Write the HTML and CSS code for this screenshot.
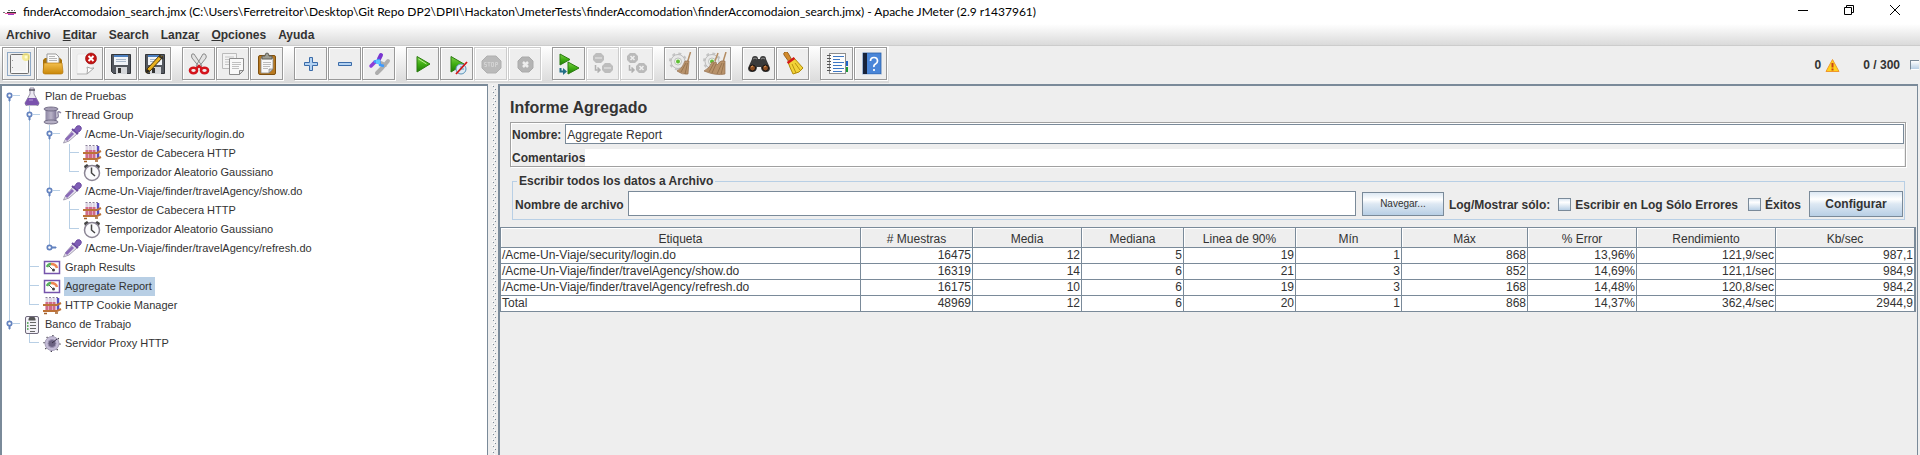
FILE: index.html
```html
<!DOCTYPE html>
<html lang="es">
<head>
<meta charset="utf-8">
<title>finderAccomodaion_search.jmx - Apache JMeter</title>
<link rel="stylesheet" href="styles.css">
</head>
<body>
<svg class="sprite" aria-hidden="true">
  <defs>
    <linearGradient id="green" x1="0" y1="0" x2="0" y2="1"><stop offset="0" stop-color="#7fd04a"/><stop offset=".5" stop-color="#3fae12"/><stop offset="1" stop-color="#1f7a08"/></linearGradient>
    <linearGradient id="gold" x1="0" y1="0" x2="0" y2="1"><stop offset="0" stop-color="#f3bf4e"/><stop offset="1" stop-color="#c98708"/></linearGradient>
    <linearGradient id="violet" x1="0" y1="0" x2="1" y2="0"><stop offset="0" stop-color="#8d86a3"/><stop offset=".5" stop-color="#b9b3c8"/><stop offset="1" stop-color="#7d7496"/></linearGradient>
  </defs>
  <symbol id="i-new" viewBox="0 0 24 24"><rect x=".5" y=".5" width="23" height="23" fill="#eee" stroke="#8fa9c6"/><rect x="3.500" y="2.500" width="18" height="19" rx="1" fill="#f2f2f2" stroke="#6f6f6f"/><path d="M5 20h15V6" fill="none" stroke="#fff"/><path d="M5.500 8v1M5.500 15v1" stroke="#999"/><circle cx="19" cy="5" r="4" fill="#f4e77c" opacity=".8"/><circle cx="19" cy="5" r="1.500" fill="#fffbd0"/></symbol>
  <symbol id="i-open" viewBox="0 0 24 24"><path d="M2 21V8l2-2h15l2 2v13z" fill="#a8720a"/><path d="M6 12V2h9l3 3v7z" fill="#fafafa" stroke="#999"/><path d="M8 4.500h6M8 6.500h8M8 8.500h8" stroke="#b5b5b5"/><path d="M2 20l1-9h18l1 9q0 2-2 2H4q-2 0-2-2z" fill="url(#gold)" stroke="#b8790c" stroke-width=".7"/></symbol>
  <symbol id="i-close" viewBox="0 0 24 24"><path d="M2 22V4q0-2 2-2h14v14l-6 6z" fill="#f6f6f6" stroke="#ddd" stroke-width=".6"/><path d="M12 22q1-5 0-7 4 2 7 1z" fill="#fff" stroke="#a5a5a5"/><path d="M2 22h10" stroke="#bbb"/><circle cx="16" cy="6.500" r="5.500" fill="#c41414" stroke="#8f0c0c" stroke-width=".6"/><path d="M13.500 4l5 5M18.500 4l-5 5" stroke="#fff" stroke-width="2"/></symbol>
  <symbol id="i-save" viewBox="0 0 24 24"><path d="M2.500 2.500h19v19h-17l-2-2z" fill="#54585f" stroke="#33363b"/><rect x="5" y="3" width="14" height="10" fill="#f1f4f8"/><rect x="5" y="3" width="14" height="2" fill="#4b7fc0"/><path d="M7 7.500h10M7 9.500h10" stroke="#a9b8ca"/><rect x="7" y="15" width="11" height="7" fill="#d5d7da"/><rect x="9" y="16" width="3" height="5" fill="#333"/></symbol>
  <symbol id="i-saveas" viewBox="0 0 24 24"><use href="#i-save"/><path d="M3 21l1-4L17 3l3 2L7 19z" fill="#e8b120" stroke="#4a3305"/><path d="M16 4l4 3" stroke="#333" stroke-width="2"/><path d="M3 21l1-4 3 2z" fill="#222"/></symbol>
  <symbol id="i-cut" viewBox="0 0 24 24"><path d="M5 2q-1 2 0 4l8 10 2-2L7 2zM18 2q2 2 1 4L11 16l-2-2 7-12z" fill="#e3e3e3" stroke="#8b8b8b"/><ellipse cx="6.500" cy="18.500" rx="3.500" ry="2.700" fill="none" stroke="#d4141c" stroke-width="2.600"/><ellipse cx="17.500" cy="18.500" rx="3.500" ry="2.700" fill="none" stroke="#d4141c" stroke-width="2.600"/><path d="M9 17l3-3 3 3" fill="none" stroke="#d4141c" stroke-width="2.400"/></symbol>
  <symbol id="i-copy" viewBox="0 0 24 24"><path d="M1.500 1.500h14v15h-14z" fill="#f3f3f3" stroke="#bbb"/><path d="M4 5h9M4 7.500h4M4 10h4M4 12.500h4" stroke="#c5c5c5"/><path d="M8.500 6.500h14v12l-4 4h-10z" fill="#f9f9f9" stroke="#8c8c8c"/><path d="M11 10.500h9M11 12.500h9M11 14.500h7M11 16.500h7" stroke="#c0c0c0"/><path d="M18.500 22.500v-4h4z" fill="#ddd" stroke="#888"/></symbol>
  <symbol id="i-paste" viewBox="0 0 24 24"><rect x="3.500" y="3.500" width="17" height="19" rx="1.500" fill="#b87a22" stroke="#80500f"/><path d="M6 6h12v11l-4 4H6z" fill="#f8f8f8" stroke="#8a8a8a" stroke-width=".8"/><path d="M8 10.500h8M8 12.500h8M8 14.500h7M8 16.500h5" stroke="#bbb"/><path d="M14 21v-4h4z" fill="#ccc" stroke="#777" stroke-width=".6"/><path d="M7 7V4h3q0-3 2-3t2 3h3v3z" fill="#9d9d93" stroke="#5f5f58"/></symbol>
  <symbol id="i-plus" viewBox="0 0 24 24"><path d="M10.500 5.500h3v5h5v3h-5v5h-3v-5h-5v-3h5z" fill="#b3d2f2" stroke="#3a6ba8"/></symbol>
  <symbol id="i-minus" viewBox="0 0 24 24"><path d="M5.500 10.500h13v3h-13z" fill="#b3d2f2" stroke="#3a6ba8"/></symbol>
  <symbol id="i-toggle" viewBox="0 0 24 24"><path d="M10 21l5-5M15 16l6-7M14 11l4 2" stroke="#adadad" stroke-width="4" stroke-linecap="round"/><path d="M14 3l-2 4" stroke="#7a35cf" stroke-width="4" stroke-linecap="round"/><path d="M4 14l4-4" stroke="#8b3ed8" stroke-width="3.500" stroke-linecap="round"/><path d="M7 10l5-2 1 5 4 1" fill="none" stroke="#3d9bff" stroke-width="2.500" stroke-linejoin="round"/><rect x="9" y="8" width="4" height="4" fill="#5fc6ff"/></symbol>
  <symbol id="i-start" viewBox="0 0 24 24"><path d="M6 4.500L19 12 6 20z" fill="url(#green)" stroke="#2b7d10"/><path d="M7.500 7l8 5" stroke="#b5ee8c"/></symbol>
  <symbol id="i-startno" viewBox="0 0 24 24"><path d="M6 4.500L19 12 6 20z" fill="url(#green)" stroke="#2b7d10"/><circle cx="16" cy="17" r="5" fill="#dceaf4" stroke="#5b93b8"/><path d="M16 14v3h3" fill="none" stroke="#5b93b8"/><path d="M11 22L22 10" stroke="#d01515" stroke-width="1.800"/></symbol>
  <symbol id="i-stop" viewBox="0 0 24 24"><path d="M8 4h9l5 5v7l-5 5H8l-5-5V9z" fill="#bababa" stroke="#b0b0b0"/><path d="M7.500 10.500h-2v2h2v2h-2M8.500 10.500h3M10 10.500v4M12.500 10.500h2v4h-2zM16.500 15v-4.500h2v2h-2" fill="none" stroke="#d2d2d2"/></symbol>
  <symbol id="i-shut" viewBox="0 0 24 24"><path d="M9 5h7l4 4v7l-4 4H9l-4-4V9z" fill="#b4b4b4" stroke="#aaa"/><path d="M10 10l5 5M15 10l-5 5" stroke="#eee" stroke-width="2.500"/></symbol>
  <symbol id="i-rstart" viewBox="0 0 24 24"><path d="M3 2l10 5.500L3 13z" fill="url(#green)" stroke="#2b7d10"/><path d="M11 10l11 6-11 6z" fill="url(#green)" stroke="#2b7d10"/><path d="M3.500 16v3.500H7" fill="none" stroke="#216d86" stroke-width="2"/><path d="M6 16l4 3.500L6 23z" fill="#216d86"/></symbol>
  <symbol id="i-rstop" viewBox="0 0 24 24"><path d="M5 1h5l3 3v4l-3 3H5L2 8V4zM14 11h5l3 3v4l-3 3h-5l-3-3v-4z" fill="#bdbdbd"/><path d="M4 6h7M13 16h7" stroke="#d4d4d4" stroke-width="2"/><path d="M4.500 13v5H8M6.500 15.500L9 18l-2.500 2.500" fill="none" stroke="#b0b0b0" stroke-width="1.500"/></symbol>
  <symbol id="i-rshut" viewBox="0 0 24 24"><path d="M5 1h5l3 3v4l-3 3H5L2 8V4zM14 11h5l3 3v4l-3 3h-5l-3-3v-4z" fill="#bababa"/><path d="M5.500 4l4 4M9.500 4l-4 4M14.500 14l4 4M18.500 14l-4 4" stroke="#eee" stroke-width="1.600"/><path d="M4.500 13v5H8M6.500 15.500L9 18l-2.500 2.500" fill="none" stroke="#b0b0b0" stroke-width="1.500"/></symbol>
  <symbol id="i-gear" viewBox="0 0 24 24"><circle cx="9" cy="9.500" r="8" fill="none" stroke="#c4c4c4" stroke-width="2" stroke-dasharray="3 3.300"/><circle cx="9" cy="9.500" r="7" fill="#e9e9e9" stroke="#bbb"/><circle cx="9" cy="9.500" r="3.500" fill="#eef5ea" stroke="#aaa" stroke-width=".7"/><circle cx="9" cy="9.500" r="2" fill="#5fbf35"/></symbol>
  <symbol id="i-clear" viewBox="0 0 24 24"><use href="#i-gear"/><path d="M21.500 0l-3 10" stroke="#b38c62" stroke-width="1.500"/><path d="M16 9h4l-1 13q-6 1-11-3 6-3 8-10z" fill="#b8926a" stroke="#967150" stroke-width=".7"/><path d="M17 11l-5 9M18.500 11l-2.500 11" stroke="#8a6744" stroke-width=".7"/></symbol>
  <symbol id="i-clearall" viewBox="0 0 24 24"><use href="#i-gear"/><path d="M15 1l-3 8M23 0l-3 10" stroke="#b38c62" stroke-width="1.500"/><path d="M9 10h4l1 3 4-4h4v13q-9 2-21-3 6-3 8-9z" fill="#b8926a" stroke="#967150" stroke-width=".7"/><path d="M11 11l-5 9M13 12l-4 9M19 11l-5 11M21 11l-3 11" stroke="#8a6744" stroke-width=".7"/></symbol>
  <symbol id="i-find" viewBox="0 0 24 24"><path d="M5 7q0-3 3-3t3 3h2q0-3 3-3t3 3l4 9q0 4-4 4-5 0-5-5h-4q0 5-5 5-4 0-4-4z" fill="#3a3a3a"/><path d="M6 7q2-2 4 0M14 7q2-2 4 0" fill="none" stroke="#8d8d8d"/><circle cx="5.500" cy="16" r="3" fill="#8a4d22" stroke="#111"/><circle cx="18.500" cy="16" r="3" fill="#8a4d22" stroke="#111"/><path d="M4 15l2-1M17 15l2-1" stroke="#e09a5a"/></symbol>
  <symbol id="i-broom" viewBox="0 0 24 24"><path d="M4 0q2-1 3 1l4 7-3 2-5-7q-1-2 1-3z" fill="#d18a2c" stroke="#8b5412" stroke-width=".8"/><path d="M7 10l6-4 9 10q-3 5-10 6Q9 16 7 10z" fill="#f2d338" stroke="#b08a0b"/><path d="M6.500 11l7-5" stroke="#d61919" stroke-width="2.400"/><path d="M11 12l4 9M14 11l5 7" stroke="#b9930f"/></symbol>
  <symbol id="i-list" viewBox="0 0 24 24"><rect x="4.500" y="1.500" width="16" height="20" fill="#fdfdfd" stroke="#8e8e8e"/><path d="M8 4.500h11M8 7.500h7M8 10.500h11M8 13.500h9M8 16.500h11M8 19.500h9" stroke="#3e78c4"/><path d="M2 3.500h4M2 6.500h4M2 9.500h4M2 12.500h4M2 15.500h4M2 18.500h4" stroke="#555"/><path d="M21 9h2v5h-2z" fill="#1d63c7"/><path d="M21 15h2v5h-2z" fill="#1b9a36"/></symbol>
  <symbol id="i-help" viewBox="0 0 24 24"><rect x="4" y="1" width="18" height="21" fill="#4a86d8" stroke="#2d62a8" stroke-width=".8"/><rect x="4" y="1" width="4" height="21" fill="#18233a"/><path d="M4 22.500h18" stroke="#c9d4e4"/><path d="M11.500 9q0-3.500 3.500-3.500T18.500 9q0 2-2 3t-1.500 3M15 17v2" fill="none" stroke="#fff" stroke-width="1.700"/></symbol>

  <symbol id="t-flask" viewBox="0 0 20 19"><path d="M8 1h4v6l5 9q0 3-3 3H6q-3 0-3-3l5-9z" fill="#ece9f2" stroke="#948ea3"/><path d="M6 11h8l3 5q0 2-3 2H6q-3 0-3-2z" fill="#7a52ad"/><path d="M7 3h6" stroke="#55505f" stroke-width="1.500"/><path d="M7 13h4" stroke="#b59bd8"/></symbol>
  <symbol id="t-spool" viewBox="0 0 20 19"><path d="M3.500 4h11v11h-11z" fill="url(#violet)"/><ellipse cx="9" cy="3" rx="7" ry="2" fill="#a49db5" stroke="#655e78" stroke-width=".8"/><ellipse cx="9" cy="16" rx="7" ry="2" fill="#b5afc4" stroke="#655e78" stroke-width=".8"/><path d="M14 12q3 0 2-4t3-1" fill="none" stroke="#8d86a3" stroke-width="1.500"/></symbol>
  <symbol id="t-drop" viewBox="0 0 20 19"><path d="M1.500 18L4 13l7-8 4 4-8 7z" fill="#e7e2ef" stroke="#a59fb3"/><path d="M4 15l7-7" stroke="#8b6bb8" stroke-width="3"/><path d="M10 4l6 5" stroke="#6a4a9c" stroke-width="2"/><path d="M12 5l3-4q3-1 4 1t-1 4l-3 2z" fill="#7f5db6" stroke="#6c4ba0"/></symbol>
  <symbol id="t-rack" viewBox="0 0 20 19"><path d="M5 2v13M8.500 2v13M12 2v13" stroke="#ddd6e4" stroke-width="3"/><path d="M5 6v9M8.500 6v9M12 6v9" stroke="#d06a8a" stroke-width="3"/><path d="M16 2v12" stroke="#5a4ec0" stroke-width="2.500"/><path d="M3.500 1.500h14" stroke="#8a8098" stroke-dasharray="2 1.500"/><path d="M1 9h14l4-2M1 15h14l4-2" fill="none" stroke="#bd7238" stroke-width="2"/><path d="M2 17.500h3M13 17h3" stroke="#a2602a" stroke-width="1.500"/></symbol>
  <symbol id="t-clock" viewBox="0 0 20 19"><path d="M2 3l3-2 2 2-4 3zM18 3l-3-2-2 2 4 3z" fill="#444"/><circle cx="10" cy="10" r="7.500" fill="#fbfbfd" stroke="#8b8594" stroke-width="1.500"/><path d="M9.500 4.500V10l3.500 3" fill="none" stroke="#444" stroke-width="1.500"/></symbol>
  <symbol id="t-graph" viewBox="0 0 20 19"><path d="M2.500 3.500h15v12h-15z" fill="#fff" stroke="#7654ac" stroke-width="1.500"/><path d="M5 9q1-3 4-3" fill="none" stroke="#58b05c" stroke-width="2.500"/><path d="M9 6q5 0 6 4" fill="none" stroke="#ee8652" stroke-width="2.500"/><path d="M7 8l4 4" stroke="#555"/><circle cx="11.500" cy="12" r="1.500" fill="#444"/></symbol>
  <symbol id="t-bench" viewBox="0 0 20 19"><rect x="3.500" y="1.500" width="13" height="17" rx="1.500" fill="#f3f1f7" stroke="#706a7c"/><path d="M6.500 4l1-2h5l1 2v1.500h-7z" fill="#555"/><path d="M8 7.500h6M8 10.500h6M8 13.500h6M8 16.500h5" stroke="#666"/><path d="M5 8h1.500M5 11h1.500M5 14h1.500" stroke="#3a9a3a" stroke-width="1.500"/></symbol>
  <symbol id="t-proxy" viewBox="0 0 20 19"><circle cx="10" cy="9.500" r="7" fill="#c4bcd6" stroke="#a59db8"/><circle cx="10" cy="9.500" r="8" fill="none" stroke="#2d2838" stroke-width="1.200" stroke-dasharray="1.200 5.100"/><circle cx="10" cy="9.500" r="4" fill="#6a6180" stroke="#9f96b5"/><path d="M10 9l5-4" stroke="#3a3248"/></symbol>
  <symbol id="h-open" viewBox="0 0 16 19"><path d="M7 8.500h7" stroke="#b8cfe5"/><path d="M3 9h1v5H3z" fill="#6382bf" stroke="#6382bf"/><circle cx="3.500" cy="8.500" r="2.200" fill="#fff" stroke="#6382bf" stroke-width="1.700"/></symbol>
  <symbol id="h-shut" viewBox="0 0 16 19"><path d="M4 8h6v1H4z" fill="#6382bf" stroke="#6382bf"/><circle cx="3.500" cy="8.500" r="2.200" fill="#fff" stroke="#6382bf" stroke-width="1.700"/></symbol>
</svg>

<header class="titlebar">
  <svg class="app-icon" viewBox="0 0 14 14" aria-hidden="true"><path d="M0 7.500h2M5 5.500h7" stroke="#777" stroke-dasharray="2 1"/><path d="M2 8.500h11" stroke="#e2559b"/><path d="M4 7.500h9" stroke="#333"/><path d="M5 9.500h6" stroke="#a13cc0"/></svg>
  <h1 class="title">finderAccomodaion_search.jmx (C:\Users\Ferretreitor\Desktop\Git Repo DP2\DPII\Hackaton\JmeterTests\finderAccomodation\finderAccomodaion_search.jmx) - Apache JMeter (2.9 r1437961)</h1>
  <div class="winctl">
    <button aria-label="Minimizar"><svg viewBox="0 0 12 12"><path d="M1 6.500h10" stroke="#000"/></svg></button>
    <button aria-label="Restaurar"><svg viewBox="0 0 12 12"><path d="M1.500 3.500h7v7h-7zM3.500 3V1.500h7v7H9" fill="none" stroke="#000"/></svg></button>
    <button aria-label="Cerrar"><svg viewBox="0 0 12 12"><path d="M1 1l10 10M11 1L1 11" stroke="#000"/></svg></button>
  </div>
</header>

<nav class="menubar">
  <button>Archivo</button><button><u>E</u>ditar</button><button>Search</button><button>Lanza<u>r</u></button><button><u>O</u>pciones</button><button>Ayuda</button>
</nav>

<div class="toolrow">
  <div class="toolbar">
    <div class="group">
      <button aria-label="Nuevo"><svg><use href="#i-new"/></svg></button><button aria-label="Abrir"><svg><use href="#i-open"/></svg></button><button aria-label="Cerrar plan"><svg><use href="#i-close"/></svg></button><button aria-label="Guardar"><svg><use href="#i-save"/></svg></button><button aria-label="Guardar como"><svg><use href="#i-saveas"/></svg></button>
    </div>
    <div class="group">
      <button aria-label="Cortar"><svg><use href="#i-cut"/></svg></button><button aria-label="Copiar"><svg><use href="#i-copy"/></svg></button><button aria-label="Pegar"><svg><use href="#i-paste"/></svg></button>
    </div>
    <div class="group">
      <button aria-label="Expandir"><svg><use href="#i-plus"/></svg></button><button aria-label="Contraer"><svg><use href="#i-minus"/></svg></button><button aria-label="Conmutar"><svg><use href="#i-toggle"/></svg></button>
    </div>
    <div class="group">
      <button aria-label="Arrancar"><svg><use href="#i-start"/></svg></button><button aria-label="Arrancar sin pausas"><svg><use href="#i-startno"/></svg></button><button aria-label="Parar" disabled><svg><use href="#i-stop"/></svg></button><button aria-label="Interrumpir" disabled><svg><use href="#i-shut"/></svg></button>
    </div>
    <div class="group">
      <button aria-label="Arrancar remoto"><svg><use href="#i-rstart"/></svg></button><button aria-label="Parar remoto" disabled><svg><use href="#i-rstop"/></svg></button><button aria-label="Interrumpir remoto" disabled><svg><use href="#i-rshut"/></svg></button>
    </div>
    <div class="group">
      <button aria-label="Limpiar"><svg><use href="#i-clear"/></svg></button><button aria-label="Limpiar todo"><svg><use href="#i-clearall"/></svg></button>
    </div>
    <div class="group">
      <button aria-label="Buscar"><svg><use href="#i-find"/></svg></button><button aria-label="Restablecer búsqueda"><svg><use href="#i-broom"/></svg></button>
    </div>
    <div class="group">
      <button aria-label="Funciones"><svg><use href="#i-list"/></svg></button><button aria-label="Ayuda"><svg><use href="#i-help"/></svg></button>
    </div>
  </div>
  <div class="status">
    <span>0</span>
    <svg class="warn" viewBox="0 0 15 15" aria-hidden="true"><path d="M7.500 1.500L14 13.500H1z" fill="#ffd21f" stroke="#f0992c" stroke-linejoin="round"/><path d="M7.500 5v4.500M7.500 10.500v2" stroke="#c8421a" stroke-width="2"/></svg>
    <span class="threads">0 / 300</span>
    <span class="lamp"></span>
  </div>
</div>

<main class="split">
  <section class="tree-pane">
    <ul class="tree">
      <li><button class="cell last down" aria-label="Contraer"><svg><use href="#h-open"/></svg></button><svg class="ico"><use href="#t-flask"/></svg><span class="label">Plan de Pruebas</span></li>
      <li><i class="cell v"></i><button class="cell last v" aria-label="Contraer"><svg><use href="#h-open"/></svg></button><svg class="ico"><use href="#t-spool"/></svg><span class="label">Thread Group</span></li>
      <li><i class="cell v"></i><i class="cell v"></i><button class="cell last v" aria-label="Contraer"><svg><use href="#h-open"/></svg></button><svg class="ico"><use href="#t-drop"/></svg><span class="label">/Acme-Un-Viaje/security/login.do</span></li>
      <li><i class="cell v"></i><i class="cell v"></i><i class="cell v"></i><i class="cell last tee"></i><svg class="ico"><use href="#t-rack"/></svg><span class="label">Gestor de Cabecera HTTP</span></li>
      <li><i class="cell v"></i><i class="cell v"></i><i class="cell v"></i><i class="cell last elbow"></i><svg class="ico"><use href="#t-clock"/></svg><span class="label">Temporizador Aleatorio Gaussiano</span></li>
      <li><i class="cell v"></i><i class="cell v"></i><button class="cell last v" aria-label="Contraer"><svg><use href="#h-open"/></svg></button><svg class="ico"><use href="#t-drop"/></svg><span class="label">/Acme-Un-Viaje/finder/travelAgency/show.do</span></li>
      <li><i class="cell v"></i><i class="cell v"></i><i class="cell v"></i><i class="cell last tee"></i><svg class="ico"><use href="#t-rack"/></svg><span class="label">Gestor de Cabecera HTTP</span></li>
      <li><i class="cell v"></i><i class="cell v"></i><i class="cell v"></i><i class="cell last elbow"></i><svg class="ico"><use href="#t-clock"/></svg><span class="label">Temporizador Aleatorio Gaussiano</span></li>
      <li><i class="cell v"></i><i class="cell v"></i><button class="cell last up" aria-label="Expandir"><svg><use href="#h-shut"/></svg></button><svg class="ico"><use href="#t-drop"/></svg><span class="label">/Acme-Un-Viaje/finder/travelAgency/refresh.do</span></li>
      <li><i class="cell v"></i><i class="cell last tee"></i><svg class="ico"><use href="#t-graph"/></svg><span class="label">Graph Results</span></li>
      <li><i class="cell v"></i><i class="cell last tee"></i><svg class="ico"><use href="#t-graph"/></svg><span class="label selected">Aggregate Report</span></li>
      <li><i class="cell v"></i><i class="cell last elbow"></i><svg class="ico"><use href="#t-rack"/></svg><span class="label">HTTP Cookie Manager</span></li>
      <li><button class="cell last up" aria-label="Contraer"><svg><use href="#h-open"/></svg></button><svg class="ico"><use href="#t-bench"/></svg><span class="label">Banco de Trabajo</span></li>
      <li><i class="cell"></i><i class="cell last elbow"></i><svg class="ico"><use href="#t-proxy"/></svg><span class="label">Servidor Proxy HTTP</span></li>
    </ul>
  </section>
  <div class="divider"></div>
  <section class="detail">
    <h2>Informe Agregado</h2>
    <div class="namebox">
      <div class="name-row"><label for="nombre">Nombre:</label><input id="nombre" type="text" value="Aggregate Report"></div>
      <div class="comment-row"><label for="coment">Comentarios</label><input id="coment" type="text"></div>
    </div>
    <fieldset class="filebox">
      <legend>Escribir todos los datos a Archivo</legend>
      <div class="file-row">
        <label class="cap" for="archivo">Nombre de archivo</label>
        <input id="archivo" class="file-input" type="text">
        <button class="btn browse">Navegar...</button>
        <span class="cap">Log/Mostrar sólo:</span>
        <label class="check cap"><input type="checkbox">Escribir en Log Sólo Errores</label>
        <label class="check cap"><input type="checkbox">Éxitos</label>
        <button class="btn config">Configurar</button>
      </div>
    </fieldset>
    <div class="table-wrap">
      <table>
        <colgroup><col class="c-label"><col class="c-112"><col class="c-109"><col class="c-102"><col class="c-112"><col class="c-106"><col class="c-126"><col class="c-109"><col class="c-139"><col class="c-139"></colgroup>
        <thead><tr><th>Etiqueta</th><th># Muestras</th><th>Media</th><th>Mediana</th><th>Linea de 90%</th><th>Mín</th><th>Máx</th><th>% Error</th><th>Rendimiento</th><th>Kb/sec</th></tr></thead>
        <tbody>
          <tr><td>/Acme-Un-Viaje/security/login.do</td><td>16475</td><td>12</td><td>5</td><td>19</td><td>1</td><td>868</td><td>13,96%</td><td>121,9/sec</td><td>987,1</td></tr>
          <tr><td>/Acme-Un-Viaje/finder/travelAgency/show.do</td><td>16319</td><td>14</td><td>6</td><td>21</td><td>3</td><td>852</td><td>14,69%</td><td>121,1/sec</td><td>984,9</td></tr>
          <tr><td>/Acme-Un-Viaje/finder/travelAgency/refresh.do</td><td>16175</td><td>10</td><td>6</td><td>19</td><td>3</td><td>168</td><td>14,48%</td><td>120,8/sec</td><td>984,2</td></tr>
          <tr><td>Total</td><td>48969</td><td>12</td><td>6</td><td>20</td><td>1</td><td>868</td><td>14,37%</td><td>362,4/sec</td><td>2944,9</td></tr>
        </tbody>
      </table>
    </div>
  </section>
</main>
</body>
</html>
```
FILE: styles.css
```css
* { box-sizing: border-box; }
body {
  margin: 0;
  min-height: 100vh;
  display: flex;
  flex-direction: column;
  background: #eee;
  color: #333;
  font: bold 12px/16px "Liberation Sans", Arial, sans-serif;
}
button, input { font: inherit; color: inherit; margin: 0; padding: 0; border: 0; border-radius: 0; }
button { background: none; }
svg { display: block; }
.sprite { position: absolute; width: 0; height: 0; }

.titlebar { display: flex; align-items: center; height: 24px; padding-left: 3px; background: #fff; }
.app-icon { width: 14px; height: 14px; margin-right: 6px; }
.title { margin: 0; flex: 1; color: #000; font: 12px/16px Lato, "Noto Sans", sans-serif; white-space: nowrap; }
.winctl { display: flex; align-self: flex-start; margin-right: 2px; }
.winctl button { width: 46px; height: 20px; display: grid; place-items: center; }
.winctl svg { width: 12px; height: 12px; }

.menubar { display: flex; gap: 12px; height: 22px; padding: 0 6px; border-bottom: 1px solid #ccc; background: linear-gradient(#fff, #dadada); }

.toolrow { display: flex; justify-content: space-between; align-items: center; height: 38px; }
.toolbar { display: flex; gap: 10px; padding: 1px 2px 3px; background: linear-gradient(#fff, #dadada); border-bottom: 1px solid #eee; }
.group { display: flex; padding-right: 1px; gap: 1px; }
.group:last-child { padding-right: 0; }
.toolbar button { width: 33px; height: 33px; display: grid; place-items: center; background: #eee; border: 1px solid #999; box-shadow: 1px 1px 0 #fff, inset 1px 1px 0 #fff; }
.toolbar button:disabled { border-color: #ccc; }
.toolbar svg { width: 24px; height: 24px; }
.status { display: flex; align-items: center; }
.warn { width: 15px; height: 15px; margin-left: 4px; }
.threads { margin: 0 10px 0 23px; }
.lamp { width: 9px; height: 10px; margin-right: 1px; border: 1px solid #7a8a99; border-right: 0; border-bottom-color: #fff; background: linear-gradient(#fff, #b8cfe5); }

.split { flex: 1; display: grid; grid-template-columns: 488fr 10fr 1420fr; padding-right: 2px; }
.tree-pane { background: #fff; border: solid #7a8a99; border-width: 2px 1px 0 2px; }
.tree { list-style: none; margin: 0; padding: 1px 0 0 4px; font: 11px/19px "Liberation Sans", Arial, sans-serif; }
.tree li { display: flex; height: 19px; white-space: nowrap; }
.cell { flex: none; width: 20px; height: 19px; }
.last { width: 16px; }
.cell svg { width: 16px; height: 19px; }
.v { background: linear-gradient(#b8cfe5, #b8cfe5) 3px 0 / 1px 100% no-repeat; }
.up { background: linear-gradient(#b8cfe5, #b8cfe5) 3px 0 / 1px 9px no-repeat; }
.down { background: linear-gradient(#b8cfe5, #b8cfe5) 3px 9px / 1px 10px no-repeat; }
.tee { background: linear-gradient(#b8cfe5, #b8cfe5) 3px 0 / 1px 100% no-repeat, linear-gradient(#b8cfe5, #b8cfe5) 3px 8px / 10px 1px no-repeat; }
.elbow { background: linear-gradient(#b8cfe5, #b8cfe5) 3px 0 / 1px 9px no-repeat, linear-gradient(#b8cfe5, #b8cfe5) 3px 8px / 10px 1px no-repeat; }
.ico { flex: none; width: 20px; height: 19px; }
.label { margin-left: 2px; padding: 0 3px 0 1px; }
.selected { background: #b8cfe5; }

.divider {
  margin: 0 0 0 2px;
  background:
    linear-gradient(#7a8a99, #7a8a99 1px, transparent 1px) 3px 2px / 1px 6px repeat-y,
    linear-gradient(#7a8a99, #7a8a99 1px, transparent 1px) 5px 5px / 1px 6px repeat-y,
    linear-gradient(#fff, #fff 1px, transparent 1px) 2px 1px / 1px 6px repeat-y,
    linear-gradient(#fff, #fff 1px, transparent 1px) 4px 4px / 1px 6px repeat-y,
    #eee;
}

.detail { min-width: 0; border: solid #7a8a99; border-width: 2px 1px 0 2px; }
h2 { margin: 11px 10px 3px; font-size: 16px; line-height: 22px; }
.namebox { margin: 0 11px 0 10px; border: 1px solid #a0a0a0; box-shadow: 1px 1px 0 #fff, inset 1px 1px 0 #fff; padding: 1px 1px 0; }
.name-row { display: flex; align-items: center; gap: 4px; height: 20px; }
.name-row label { padding-top: 2px; }
.name-row input { flex: 1; height: 20px; padding: 2px 1px 0; font-weight: normal; border: 1px solid #7a8a99; background: #fff; }
.comment-row { display: flex; align-items: stretch; height: 17px; margin-top: 5px; }
.comment-row label { padding-top: 1px; }
.comment-row input { flex: 1; background: #fff; }
.filebox { margin: 6px 12px 0; padding: 1px 1px 2px 2px; border: 1px solid #b8cfe5; min-width: 0; }
legend { margin-left: 2px; padding: 0 2px; }
.file-row { display: flex; align-items: center; height: 27px; white-space: nowrap; }
.cap { padding-top: 2px; }
.file-input { flex: 1; min-width: 0; height: 25px; margin: 0 6px 0 4px; border: 1px solid #7a8a99; background: #fff; padding: 0 2px; }
.btn { border: 1px solid #7a8a99; background: linear-gradient(#dde8f3, #fff 30%, #dde8f3 50%, #b8cfe5); }
.browse { width: 82px; height: 24px; margin-right: 5px; font: 10px/12px "Liberation Sans", Arial, sans-serif; }
.config { width: 94px; height: 26px; margin-left: 8px; }
.check { display: flex; align-items: center; gap: 4px; margin-left: 8px; }
.check + .check { margin-left: 10px; }
.check input { appearance: none; width: 13px; height: 13px; border: 1px solid #7a8a99; background: linear-gradient(#dde8f3, #fff 30%, #b8cfe5); }

.table-wrap { margin: 7px 1px 0 0; border: 1px solid #7a8a99; border-bottom: 0; }
table { width: 100%; table-layout: fixed; border-collapse: separate; border-spacing: 0; font-weight: normal; }
th { height: 20px; padding: 2px 0 0; font-weight: normal; line-height: 16px; border: solid #7a8a99; border-width: 0 1px 1px 0; box-shadow: inset 1px 1px 0 #fff; }
td { height: 16px; padding: 0 1px; line-height: 15px; text-align: right; background: #fff; border: solid #7a8a99; border-width: 0 1px 1px 0; }
td:first-child { text-align: left; }
.c-label { width: 360px; }
.c-102 { width: 102px; }
.c-106 { width: 106px; }
.c-109 { width: 109px; }
.c-112 { width: 112px; }
.c-126 { width: 126px; }
.c-139 { width: 139px; }
```
